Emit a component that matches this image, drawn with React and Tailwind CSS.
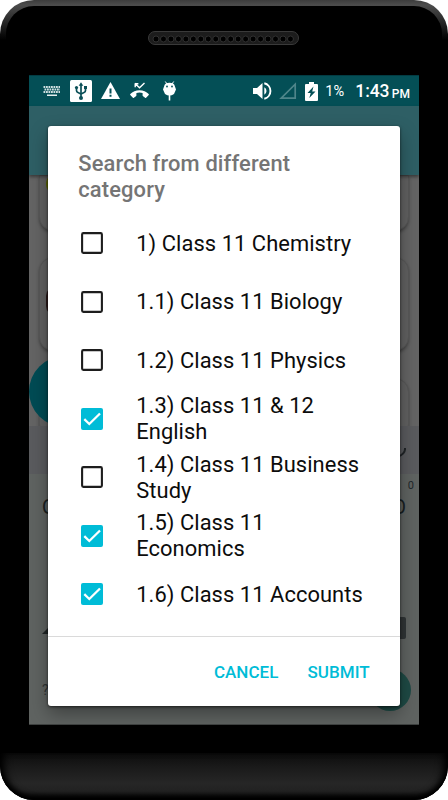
import { useState } from 'react';

const CATEGORIES = [
  { id: '1', label: '1) Class 11 Chemistry', checked: false },
  { id: '1.1', label: '1.1) Class 11 Biology', checked: false },
  { id: '1.2', label: '1.2) Class 11 Physics', checked: false },
  { id: '1.3', label: '1.3) Class 11 & 12 English', checked: true },
  { id: '1.4', label: '1.4) Class 11 Business Study', checked: false },
  { id: '1.5', label: '1.5) Class 11 Economics', checked: true },
  { id: '1.6', label: '1.6) Class 11 Accounts', checked: true },
];

const SpeakerGrille = () => (
  <div className="h-[14px] w-[151px] mr-px rounded-full bg-[#1c1c1c] border border-[#3a3a3a] flex items-center justify-center">
    <svg width="143" height="9" viewBox="0 0 143 9">
      {Array.from({ length: 19 }).map((_, i) => (
        <circle key={i} cx={4 + i * 7.47} cy="5" r="3" fill="#000" stroke="#353535" strokeWidth="0.9" />
      ))}
    </svg>
  </div>
);

const StatusBar = () => (
  <div className="h-[31px] shrink-0 bg-[#044f56] border-t border-[#023c43] flex items-center pl-[13.5px] pr-[9px] text-white">
    <svg className="mr-[9px]" width="18" height="12" viewBox="0 0 18 12">
      {[1, 3.5, 6].map((y, row) => (
        <path
          key={y}
          d={`M${row === 1 ? 1.5 : 0.5} ${y + 1}H17`}
          stroke="#cfdfe0"
          strokeWidth="1.8"
          strokeDasharray="1.8 0.7"
        />
      ))}
      <path d="M4 10.2h10" stroke="#e4eeee" strokeWidth="1.6" />
    </svg>
    <svg className="mr-[9px]" width="22" height="22" viewBox="0 0 22 22">
      <rect width="22" height="22" rx="1.5" fill="#fff" />
      <g fill="none" stroke="#0a4f57" strokeWidth="1.7">
        <path d="M11 5v12" />
        <path d="M6.5 8v2.5q0 1.5 1.5 2l3 1.5" />
        <path d="M15.5 8v2.5q0 1.5-1.5 2L11 14" />
      </g>
      <g fill="#0a4f57">
        <path d="M11 2.3l2.3 3.4H8.7z" />
        <circle cx="6.5" cy="7.5" r="1.6" />
        <path d="M14 6h3v3h-3z" />
        <circle cx="11" cy="18" r="2" />
      </g>
    </svg>
    <svg className="mr-[10px]" width="19" height="18" viewBox="0 0 19 18">
      <path d="M9.5 0L19 17H0z" fill="#fff" />
      <path d="M8.5 6.5h2v5h-2zM8.5 12.8h2v2h-2z" fill="#044f56" />
    </svg>
    <svg className="mr-[14px]" width="19" height="18" viewBox="0 0 19 18">
      <path d="M5.2 5.2V1.6M4.8 1.3l4.7 4.5 5-4.8M5 1.8h3.4" fill="none" stroke="#fff" strokeWidth="1.4" />
      <path
        d="M9.5 8.2c3.7 0 6.9 1.5 9.2 3.7.3.3.3.7 0 1l-2.6 2.8c-.3.3-.7.3-1 0-.7-.6-1.3-1-2-1.4-.3-.2-.5-.5-.5-.9v-2.4c-2-.7-4.2-.7-6.2 0v2.4c0 .4-.2.7-.5.9-.7.4-1.3.8-2 1.4-.3.3-.7.3-1 0L.3 12.900c-.3-.3-.3-.7 0-1 2.3-2.200 5.500-3.700 9.200-3.700z"
        fill="#fff"
      />
    </svg>
    <svg width="13" height="20" viewBox="0 0 13 20">
      <path d="M2.3.5L4 3M10.7.5L9 3" stroke="#fff" strokeWidth="1" />
      <path d="M1.2 5Q2 1.8 6.5 1.8T11.8 5L13 8.5 11 13Q6.500 16 2 13L0 8.500z" fill="#fff" />
      <path d="M6.5 13v6.5" stroke="#fff" strokeWidth="1.6" />
      <circle cx="4" cy="5.5" r=".9" fill="#044f56" />
      <circle cx="9" cy="5.5" r=".9" fill="#044f56" />
    </svg>

    <div className="ml-auto flex items-center">
      <svg className="mr-[7px]" width="19" height="18" viewBox="0 0 19 18">
        <path d="M0 6v6h4l5.5 5V1L4 6z" fill="#fff" />
        <path d="M11.3 5.3v7.4a4.2 4.2 0 0 0 0-7.4z" fill="#fff" />
        <path d="M11.3 1.3a7.9 7.9 0 0 1 0 15.4" fill="none" stroke="#fff" strokeWidth="1.9" />
      </svg>
      <svg className="mr-[8px]" width="18" height="18" viewBox="0 0 18 18">
        <path d="M16.2 2.2v14H2.2z" fill="none" stroke="#4f858a" strokeWidth="1.7" />
      </svg>
      <svg className="mr-[7px]" width="13" height="19" viewBox="0 0 13 19">
        <path d="M4 0h5v2h3q1 0 1 1v15q0 1-1 1H1q-1 0-1-1V3q0-1 1-1h3z" fill="#fff" />
        <path d="M8.5 4.5L2.5 11h3.2L4.3 16l6.2-6.5H7.2z" fill="#044f56" />
      </svg>
      <span className="w-[30px] text-[14.6px] leading-none pt-px">1%</span>
      <span className="text-[17.5px] leading-none font-medium tracking-[-0.1px] pt-[2px]">1:43</span>
      <span className="ml-[2.5px] text-[12px] leading-none font-medium pt-[6px]">PM</span>
    </div>
  </div>
);

const CheckBox = ({ checked }) => (
  <svg width="22" height="22" viewBox="0 0 22 22" className="shrink-0">
    {checked ? (
      <>
        <rect width="22" height="22" rx="2" fill="#00bcd7" />
        <path d="M3.3 11.2l5 4.8L19 5.5" fill="none" stroke="#fff" strokeWidth="2.3" />
      </>
    ) : (
      <rect x="1.1" y="1.1" width="19.8" height="19.8" rx="1.3" fill="none" stroke="#1d1d1d" strokeWidth="2.1" />
    )}
  </svg>
);

const ListCard = ({ className, children }) => (
  <div
    className={`mx-[10px] shrink-0 overflow-hidden bg-[#616161] border border-[#585858] shadow-[0_2px_3px_rgba(0,0,0,0.3)] flex items-center ${className}`}
  >
    {children}
  </div>
);

const DimmedPage = () => (
  <div className="flex-1 min-h-0 flex flex-col bg-[#646464]">
    <div className="h-[69px] shrink-0 bg-[#2e5f65] shadow-[0_2px_3px_rgba(0,0,0,0.4)] z-10" />
    <div className="h-[251px] shrink-0 overflow-hidden flex flex-col relative">
      <ListCard className="h-[56px] rounded-b-[14px]">
        <div className="ml-[6px] mb-[38px] h-[22px] w-[22px] rounded-full bg-[#5b6500]" />
      </ListCard>
      <ListCard className="mt-[26px] h-[94px] rounded-[14px]">
        <div className="ml-[6px] mb-[6px] h-[30px] w-[20px] rounded-full bg-[#2a1a1a]" />
      </ListCard>
      <ListCard className="mt-[27px] h-[60px] rounded-[14px]" />
      <div className="absolute left-0 top-[181px] h-[71px] w-[71px] rounded-full bg-[#004b54]" />
    </div>
    {/* soft keyboard */}
    <div className="h-[48px] shrink-0 bg-[#5a5b5e] flex items-center justify-end pr-[13px] pt-[4px]">
      <svg width="14" height="18" viewBox="0 0 14 18">
        <path d="M13 5Q13.5 11 6 13.5" fill="none" stroke="#202427" strokeWidth="2" />
      </svg>
    </div>
    <div className="flex-1 bg-[#5f6361] text-[#181f21] flex flex-col">
      <div className="h-[20px] flex justify-end items-end pr-[5px] pt-[2px] text-[11px] text-[#20272a]">0</div>
      <div className="h-[26px] flex items-center justify-between px-[13px] text-[20px]">
        <span>Q</span>
        <span>O</span>
      </div>
      <div className="mt-[97px] h-[22px] flex items-center justify-between px-[13px]">
        <svg width="16" height="14" viewBox="0 0 16 14">
          <path d="M0 13L12 1v12z" fill="#202525" />
        </svg>
        <div className="h-[22px] w-[24px] rounded-[2px] bg-[#303536]" />
      </div>
      <div className="mt-[30px] flex items-center justify-between pl-[13px] pr-[8px]">
        <span className="text-[14px] text-[#2f3435]">?123</span>
        <div className="h-[42px] w-[42px] rounded-full bg-[#1e4a45]" />
      </div>
    </div>
  </div>
);

const CategoryDialog = () => {
  const [items, setItems] = useState(CATEGORIES);

  const toggle = (id) => {
    setItems(items.map((item) => (item.id === id ? { ...item, checked: !item.checked } : item)));
  };

  return (
    <div className="h-[580px] w-[351.5px] rounded-[3px] bg-white flex flex-col shadow-[0_8px_18px_rgba(0,0,0,0.35),0_1px_3px_rgba(0,0,0,0.6)]">
      <h2 className="pt-[25px] px-[30px] h-[88px] text-[21.9px] leading-[25.5px] tracking-[0.14px] font-medium text-[#757575]">
        Search from different
        <br />
        category
      </h2>
      <div className="flex flex-col">
        {items.map((item) => (
          <div
            key={item.id}
            className="h-[58.5px] pl-[32.7px] pr-[24px] flex items-center gap-[33.3px] cursor-pointer"
            onClick={() => toggle(item.id)}
          >
            <CheckBox checked={item.checked} />
            <span className="pt-px text-[21.9px] leading-[26px] tracking-[0.06px] text-[#0c0c0c]">{item.label}</span>
          </div>
        ))}
      </div>
      <div className="mt-auto h-[70px] pt-[2px] border-t border-[#dadada] flex items-center justify-end gap-[29px] pr-[30px] text-[17px] tracking-[0.05px] font-medium text-[#00bcd7]">
        <button>CANCEL</button>
        <button>SUBMIT</button>
      </div>
    </div>
  );
};

const App = () => (
  <div className="h-[800px] w-[448px] overflow-hidden bg-white font-[Roboto,sans-serif]">
    <div className="h-full rounded-[34px] overflow-hidden bg-[linear-gradient(#3c3c3c,#4c4c4c_5px,#111_32px,#000_40px)] flex flex-col">
      <div className="mt-[6px] mx-[6px] h-[747px] shrink-0 rounded-t-[28px] bg-black flex flex-col items-center">
        <div className="h-[69px] pt-[25px]">
          <SpeakerGrille />
        </div>
        <div className="relative h-[650px] w-[390px] overflow-hidden flex flex-col border-b border-[#3d403f]">
          <StatusBar />
          <DimmedPage />
          <div className="absolute inset-0 z-20 flex justify-center pt-[51px]">
            <CategoryDialog />
          </div>
        </div>
      </div>
      <div className="flex-1 rounded-b-[34px] bg-[linear-gradient(#0c0c0c,#1a1a1a_30%,#262626_64%,#222_80%,#0c0c0c)] shadow-[inset_8px_0_8px_-4px_#000,inset_-8px_0_8px_-4px_#000,inset_0_-4px_5px_#000]" />
    </div>
  </div>
);

export default App;
